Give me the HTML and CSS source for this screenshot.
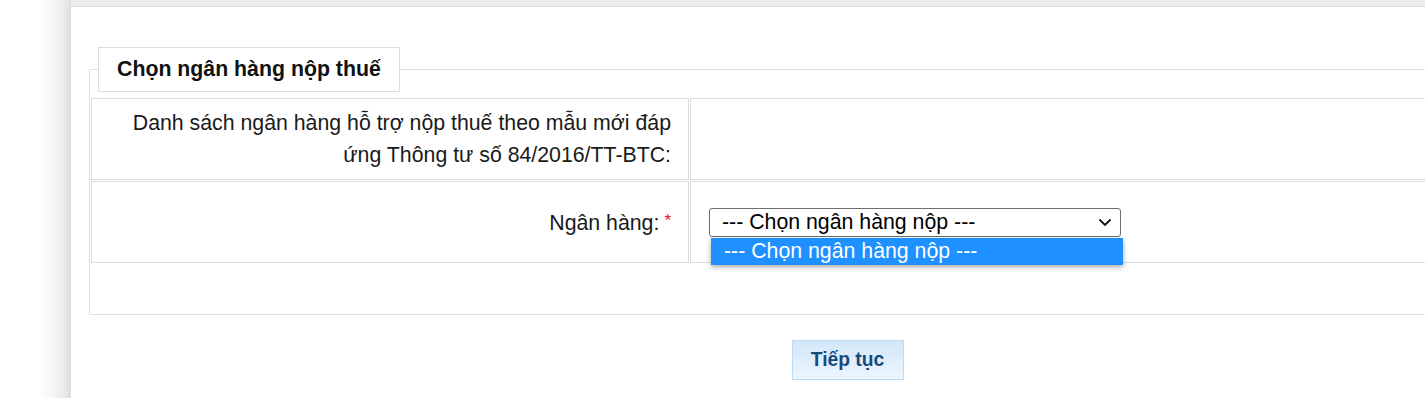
FILE: index.html
```html
<!DOCTYPE html>
<html lang="vi">
<head>
<meta charset="utf-8">
<title>Chọn ngân hàng nộp thuế</title>
<link rel="stylesheet" href="styles.css">
</head>
<body>
<div class="page">
  <div class="gutter"></div>
  <div class="panel">
    <div class="topbar"></div>
    <div class="content">
      <fieldset class="box">
        <legend class="box-title">Chọn ngân hàng nộp thuế</legend>
        <table class="form-table">
          <tr>
            <td class="label-cell">Danh sách ngân hàng hỗ trợ nộp thuế theo mẫu mới đáp ứng Thông tư số 84/2016/TT-BTC:</td>
            <td class="value-cell"></td>
          </tr>
          <tr>
            <td class="label-cell">Ngân hàng:<span class="req">*</span></td>
            <td class="value-cell">
              <div class="select-wrap">
                <div class="select">
                  <span class="select-text">--- Chọn ngân hàng nộp ---</span>
                  <svg class="chev" width="14" height="9" viewBox="0 0 14 9"><path d="M1.5 1.5 L7 7 L12.5 1.5" fill="none" stroke="#111" stroke-width="1.8"/></svg>
                </div>
                <div class="dropdown">
                  <div class="option selected">--- Chọn ngân hàng nộp ---</div>
                </div>
              </div>
            </td>
          </tr>
        </table>
      </fieldset>
      <div class="actions">
        <button class="btn" type="button">Tiếp tục</button>
      </div>
    </div>
  </div>
</div>
</body>
</html>
```

FILE: styles.css
```css
html, body {
  margin: 0;
  padding: 0;
  background: #fff;
  overflow: hidden;
}
body {
  font-family: "Liberation Sans", Arial, sans-serif;
  color: #1a1a1a;
  width: 1425px;
  height: 398px;
}
.page {
  display: flex;
  width: 1425px;
  height: 398px;
  overflow: hidden;
}
.gutter {
  flex: 0 0 71px;
  background: linear-gradient(to right, #fff 0, #fff 38px, #f6f6f6 52px, #ececec 63px, #e2e2e2 69px, #d9d9d9 71px);
}
.panel {
  flex: 0 0 1560px;
  background: #fff;
}
.topbar {
  height: 6px;
  background: #ececec;
  border-bottom: 1px solid #dcdcdc;
}
.content {
  padding: 40px 0 0 18px;
  width: 1517px;
}
.box {
  margin: 0;
  padding: 5px 0 50px 0;
  border: 1px solid #dddddd;
  min-width: 0;
}
.box-title {
  margin-left: 8px;
  padding: 0 18px;
  border: 1px solid #dddddd;
  font-size: 21.3px;
  font-weight: bold;
  line-height: 43px;
  color: #111;
  white-space: nowrap;
}
.form-table {
  border-collapse: separate;
  border-spacing: 1px;
  width: 100%;
  font-size: 21.3px;
}
.form-table td {
  border: 1px solid #dddddd;
  vertical-align: middle;
}
.label-cell {
  box-sizing: border-box;
  width: 598px;
  height: 82px;
  padding: 8px 17px 8px 30px;
  text-align: right;
  line-height: 32px;
}
.req {
  color: #e0201c;
  font-size: 17px;
  margin-left: 5px;
  vertical-align: 4px;
}
.value-cell {
  padding: 0 0 0 18px;
}
.select-wrap {
  position: relative;
  width: 412px;
}
.select {
  box-sizing: border-box;
  height: 29px;
  border: 1px solid #6e6e6e;
  border-radius: 3px;
  display: flex;
  align-items: center;
  justify-content: space-between;
  padding: 0 8px 0 12px;
  background: #fff;
  line-height: 27px;
}
.select-text {
  color: #000;
}
.chev {
  display: block;
}
.dropdown {
  position: absolute;
  top: 30px;
  left: 2px;
  width: 412px;
  background: #fff;
  box-shadow: 0 2px 5px rgba(0,0,0,0.35);
}
.option {
  height: 27px;
  line-height: 27px;
  padding-left: 13px;
}
.option.selected {
  background: #1e90ff;
  color: #fff;
}
.actions {
  display: flex;
  justify-content: center;
  padding-top: 25px;
}
.btn {
  box-sizing: border-box;
  width: 112px;
  height: 40px;
  border: 1px solid #b8dbf8;
  background: linear-gradient(to bottom, #d3e6f8, #ecf6ff);
  color: #174a7c;
  font-family: "Liberation Sans", Arial, sans-serif;
  font-size: 19.3px;
  font-weight: bold;
  padding: 0;
  cursor: pointer;
}
```
